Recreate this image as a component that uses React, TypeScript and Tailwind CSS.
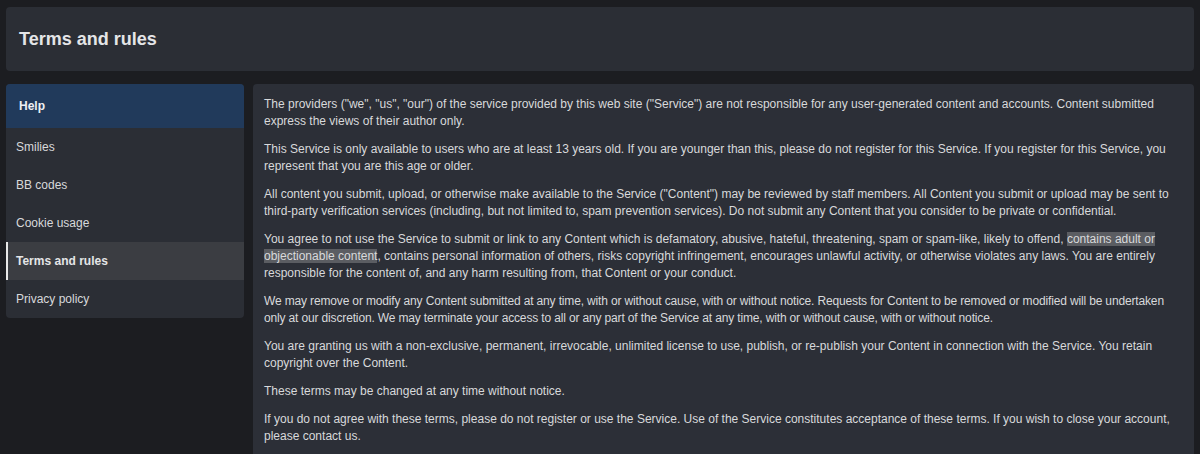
const paragraphs: { text: React.ReactNode; tight?: boolean }[] = [
  {
    text: 'The providers ("we", "us", "our") of the service provided by this web site ("Service") are not responsible for any user-generated content and accounts. Content submitted express the views of their author only.',
  },
  {
    text: "This Service is only available to users who are at least 13 years old. If you are younger than this, please do not register for this Service. If you register for this Service, you represent that you are this age or older.",
  },
  {
    text: 'All content you submit, upload, or otherwise make available to the Service ("Content") may be reviewed by staff members. All Content you submit or upload may be sent to third-party verification services (including, but not limited to, spam prevention services). Do not submit any Content that you consider to be private or confidential.',
  },
  {
    text: (
      <>
        You agree to not use the Service to submit or link to any Content which is defamatory, abusive, hateful, threatening, spam or spam-like, likely to offend,{" "}
        <span className="bg-[#5b5d62]">contains adult or objectionable content</span>, contains personal information of others, risks copyright infringement, encourages unlawful activity, or otherwise violates any laws. You are entirely responsible for the content of, and any harm resulting from, that Content or your conduct.
      </>
    ),
  },
  {
    text: "We may remove or modify any Content submitted at any time, with or without cause, with or without notice. Requests for Content to be removed or modified will be undertaken only at our discretion. We may terminate your access to all or any part of the Service at any time, with or without cause, with or without notice.",
    tight: true,
  },
  {
    text: "You are granting us with a non-exclusive, permanent, irrevocable, unlimited license to use, publish, or re-publish your Content in connection with the Service. You retain copyright over the Content.",
  },
  { text: "These terms may be changed at any time without notice." },
  {
    text: "If you do not agree with these terms, please do not register or use the Service. Use of the Service constitutes acceptance of these terms. If you wish to close your account, please contact us.",
  },
];

const navItems = ["Smilies", "BB codes", "Cookie usage", "Terms and rules", "Privacy policy"];

export default function App() {
  return (
    <div
      className="min-h-[454px] bg-[#1c1d21] px-[6px] pt-[7px] text-[#d8d9db]"
      style={{ fontFamily: '"Liberation Sans", Arial, sans-serif' }}
    >
      <header className="flex h-[64px] items-center rounded-[4px] bg-[#2b2e35] px-[13px]">
        <h1 className="text-[18px] font-bold text-[#e4e5e7]">Terms and rules</h1>
      </header>

      <div className="mt-[13px] flex items-start gap-[9px]">
        <nav className="w-[238px] shrink-0 overflow-hidden rounded-[4px] bg-[#2b2e35]">
          <div className="flex h-[44px] items-center bg-[#213a5b] px-[13px] text-[12px] font-bold text-[#eef0f3]">
            Help
          </div>
          {navItems.map((item) => {
            const active = item === "Terms and rules";
            return (
              <div
                key={item}
                className={
                  active
                    ? "flex h-[38px] items-center border-l-2 border-[#e8e8e8] bg-[#3b3d42] pl-[8px] text-[12px] font-bold text-[#e4e5e7]"
                    : "flex h-[38px] items-center px-[10px] text-[12px] text-[#d8d9db]"
                }
              >
                {item}
              </div>
            );
          })}
        </nav>

        <main className="h-[380px] flex-1 rounded-[4px] bg-[#2c2f37] pl-[11px] pr-[10px] pt-[12px]">
          {paragraphs.map((p, i) => (
            <p
              key={i}
              className={
                p.tight
                  ? "mb-[11px] text-[12px] leading-[17px] tracking-[-0.15px]"
                  : "mb-[11px] text-[12px] leading-[17px]"
              }
            >
              {p.text}
            </p>
          ))}
        </main>
      </div>
    </div>
  );
}
